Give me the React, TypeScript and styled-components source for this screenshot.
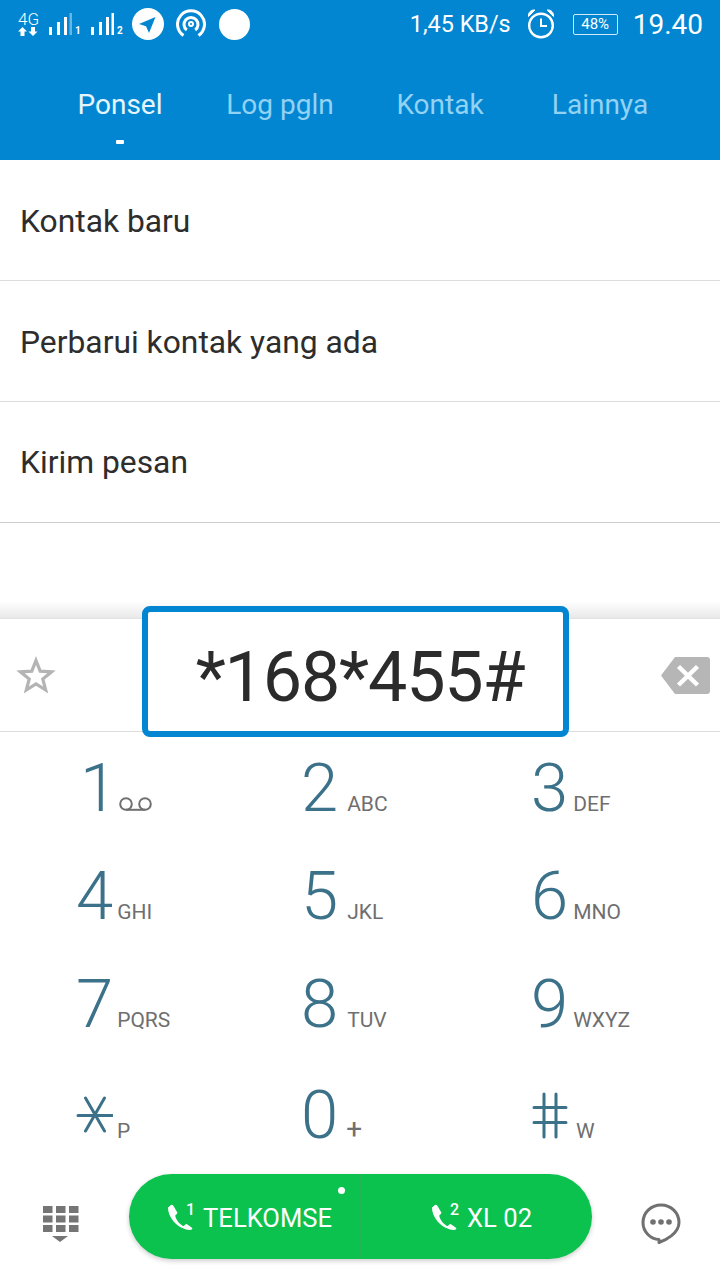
import React, { FC } from 'react';
import styled, { createGlobalStyle } from 'styled-components';

const BLUE = '#0286d2';
const TEAL = '#3b7189';
const GREY = '#6f6f6f';

const keys = [
  { digit: '1', sub: 'voicemail', gap: 0 },
  { digit: '2', sub: 'ABC', gap: 9 },
  { digit: '3', sub: 'DEF', gap: 5 },
  { digit: '4', sub: 'GHI', gap: 4 },
  { digit: '5', sub: 'JKL', gap: 9 },
  { digit: '6', sub: 'MNO', gap: 5 },
  { digit: '7', sub: 'PQRS', gap: 4 },
  { digit: '8', sub: 'TUV', gap: 9 },
  { digit: '9', sub: 'WXYZ', gap: 5 },
  { digit: '*', sub: 'P', gap: 4 },
  { digit: '0', sub: '+', gap: 8 },
  { digit: '#', sub: 'W', gap: 8 },
];

const App: FC = () => {
  return (
    <>
      <GlobalStyle />
      <Screen>
        <Header>
          <StatusBar>
            <StatusLeft>
              <NetworkBadge>
                <NetworkLabel>4G</NetworkLabel>
                <ArrowsIcon />
              </NetworkBadge>
              <SimSignal>
                <SignalIcon weak />
                <SimIndex>1</SimIndex>
              </SimSignal>
              <SimSignal>
                <SignalIcon />
                <SimIndex>2</SimIndex>
              </SimSignal>
              <TelegramIcon />
              <HotspotSvg width="30" height="30" viewBox="0 0 30 30" fill="none" stroke="#fff" strokeWidth="3">
                <path d="M7.500 26.500a13.500 13.500 0 1 1 15 0" />
                <path d="M10.800 21a7 7 0 1 1 8.400 0" />
                <circle cx="15" cy="15" r="2" strokeWidth="2" />
              </HotspotSvg>
              <WhiteDot />
            </StatusLeft>
            <StatusRight>
              <Speed>1,45 KB/s</Speed>
              <AlarmIcon />
              <Battery>48%</Battery>
              <Time>19.40</Time>
            </StatusRight>
          </StatusBar>
          <Tabs>
            <Tab $active>
              Ponsel
              <TabMark />
            </Tab>
            <Tab>Log pgln</Tab>
            <Tab>Kontak</Tab>
            <Tab>Lainnya</Tab>
          </Tabs>
        </Header>

        <List>
          <ListRow>Kontak baru</ListRow>
          <ListRow>Perbarui kontak yang ada</ListRow>
          <ListRow>Kirim pesan</ListRow>
        </List>

        <Shade />

        <DialRow>
          <StarIcon />
          <BackspaceIcon />
          <Highlight>*168*455#</Highlight>
        </DialRow>

        <Keypad>
          {keys.map((key) => (
            <Key key={key.digit}>
              <Digit $shift={key.digit === '1' ? 4 : 0}>
                {key.digit === '*' ? <AsteriskIcon /> : key.digit === '#' ? <HashIcon /> : key.digit}
              </Digit>
              {key.sub === 'voicemail' ? (
                <VoicemailIcon />
              ) : (
                <KeyLetters $gap={key.gap} $plus={key.sub === '+'}>
                  {key.sub}
                </KeyLetters>
              )}
            </Key>
          ))}
        </Keypad>

        <BottomBar>
          <DialpadIcon />
          <CallPill>
            <CallSide>
              <PhoneIcon />
              <SimNumber>1</SimNumber>
              <CallLabel>TELKOMSE</CallLabel>
            </CallSide>
            <CallSide>
              <PhoneIcon />
              <SimNumber>2</SimNumber>
              <CallLabel>XL 02</CallLabel>
            </CallSide>
            <PillDot />
          </CallPill>
          <MessageIcon />
        </BottomBar>
      </Screen>
    </>
  );
};

export default App;

const ArrowsIcon = () => (
  <svg width="20" height="9" viewBox="0 0 20 9" fill="#fff">
    <path d="M4.500 0 9 4.500H6.500V9h-4V4.500H0z" />
    <path d="M15 9l-4.500-4.500H13V0h4v4.500h2.500z" />
  </svg>
);

const SignalIcon: FC<{ weak?: boolean }> = ({ weak }) => (
  <svg width="24" height="23" viewBox="0 0 24 23" fill="#fff">
    <rect x="1" y="14" width="3" height="8" />
    <rect x="9" y="9" width="3" height="13" />
    <rect x="16" y="4" width="3" height="18" />
    <rect x="21.500" y="0" width="2.500" height="22" opacity={weak ? 0.4 : 1} />
  </svg>
);

const TelegramIcon = () => (
  <svg width="32" height="32" viewBox="0 0 32 32">
    <circle cx="16" cy="16" r="16" fill="#fff" />
    <path d="M23.500 9 7 16l7 2.200L17 25z" fill={BLUE} />
  </svg>
);

const AlarmIcon = () => (
  <svg width="28" height="30" viewBox="0 0 28 30" fill="none" stroke="#fff">
    <circle cx="14" cy="16.500" r="11.800" strokeWidth="2.400" />
    <path d="M14 9.500v7.500h6" strokeWidth="2" />
    <path d="M1.500 7.500C1 3.500 4 .5 8 1zM26.500 7.500C27 3.500 24 .5 20 1z" fill="#fff" strokeWidth="1" />
  </svg>
);

const StarIcon = () => (
  <svg width="40" height="38" viewBox="0 0 40 38" fill="none" stroke="#b4b4b4" strokeWidth="3.200">
    <path d="M20 4.500 24.200 15.200 35.600 15.800 26.800 23 29.700 34 20 28 10.300 34 13.200 23 4.400 15.800 15.800 15.200z" />
  </svg>
);

const BackspaceIcon = () => (
  <svg width="50" height="37" viewBox="0 0 50 37">
    <path d="M15 0h32a3 3 0 0 1 3 3v31a3 3 0 0 1-3 3H15L1 18.500z" fill="#b6b6b6" />
    <path d="M18.500 9.500 37.500 28M37.500 9.500 18.500 28" stroke="#fff" strokeWidth="4.500" />
  </svg>
);

const VoicemailIcon = () => (
  <VoicemailSvg width="33" height="14" viewBox="0 0 33 14" fill="none" stroke={GREY} strokeWidth="2">
    <circle cx="7" cy="7" r="5.800" />
    <circle cx="26" cy="7" r="5.800" />
    <path d="M7 12.800h19" />
  </VoicemailSvg>
);

const AsteriskIcon = () => (
  <SymbolSvg $drop={5} width="37" height="37" viewBox="0 0 37 37" fill="none" stroke={TEAL} strokeWidth="3" strokeLinecap="round">
    <path d="M2 19.500h34M9.500 2l19 33M28.500 2l-19 33" />
  </SymbolSvg>
);

const HashIcon = () => (
  <SymbolSvg $drop={-1} width="37" height="47" viewBox="0 0 37 47" fill="none" stroke={TEAL} strokeWidth="3" strokeLinecap="round">
    <path d="M3 15.500h32M3 30.500h32M13 2v43M25 2v43" />
  </SymbolSvg>
);

const DialpadIcon = () => (
  <DialpadSvg width="36" height="36" viewBox="0 0 36 36" fill="#757575">
    {[0, 1, 2].map((row) =>
      [0, 1, 2].map((col) => (
        <rect key={`${row}-${col}`} x={col * 13} y={row * 9.500} width="9.500" height="7" />
      )),
    )}
    <path d="M9 30h16l-8 6z" />
  </DialpadSvg>
);

const MessageIcon = () => (
  <MessageSvg width="40" height="41" viewBox="0 0 40 41" fill="none">
    <path
      d="M20 2C9.800 2 2 9.800 2 19.500S9.800 36 18 36.500V39.500c6-2 20-9 20-20C38 9.800 30.200 2 20 2z"
      stroke="#707070"
      strokeWidth="3"
      strokeLinejoin="round"
    />
    <circle cx="12" cy="19" r="2.800" fill="#707070" />
    <circle cx="20" cy="19" r="2.800" fill="#707070" />
    <circle cx="28" cy="19" r="2.800" fill="#707070" />
  </MessageSvg>
);

const PhoneIcon = () => (
  <svg width="26" height="27" viewBox="0 0 26 27" fill="#fff">
    <path d="M4 1 1 3.500C1 13 10 25 23 26c1.500 0 2.500-.8 2.300-2l-5.300-3.700c-.8-.4-1.300-.1-1.800.4l-1.700 1.500C12 20 8.500 15 8.200 11.500l1.800-1.700c.5-.5.500-1 .2-1.600L6.200 1.500C5.600.7 4.800.5 4 1z" />
  </svg>
);

const GlobalStyle = createGlobalStyle`
  html, body {
    margin: 0;
    padding: 0;
    background: #fff;
  }
  body {
    font-family: Roboto, "Liberation Sans", sans-serif;
  }
`;

const Screen = styled.div`
  width: 720px;
  height: 1280px;
  display: flex;
  flex-direction: column;
  overflow: hidden;
  background: #fff;
`;
const Header = styled.header`
  height: 160px;
  flex-shrink: 0;
  background: ${BLUE};
  color: #fff;
`;
const StatusBar = styled.div`
  height: 50px;
  box-sizing: border-box;
  padding: 0 17px 2px 18px;
  display: flex;
  align-items: center;
  justify-content: space-between;
`;
const StatusLeft = styled.div`
  display: flex;
  align-items: center;
`;
const NetworkBadge = styled.div`
  width: 30px;
  display: flex;
  flex-direction: column;
  align-items: flex-start;
`;
const NetworkLabel = styled.span`
  font-size: 17px;
  font-weight: 300;
  line-height: 15px;
  width: 20px;
`;
const SimSignal = styled.div`
  display: flex;
  align-items: flex-end;
  width: 42px;
`;
const SimIndex = styled.span`
  font-size: 10px;
  font-weight: 700;
  line-height: 10px;
  margin-left: 3px;
`;
const HotspotSvg = styled.svg`
  margin-left: 12px;
`;
const WhiteDot = styled.span`
  width: 31px;
  height: 31px;
  margin-left: 13px;
  border-radius: 50%;
  background: #fff;
`;
const StatusRight = styled.div`
  display: flex;
  align-items: center;
`;
const Speed = styled.span`
  font-size: 23.400px;
  margin-right: 16px;
`;
const Battery = styled.span`
  width: 45px;
  height: 21px;
  box-sizing: border-box;
  margin: 0 15px 0 18px;
  display: flex;
  align-items: center;
  justify-content: center;
  border: 1px solid #cfe9f7;
  border-radius: 2px;
  font-size: 15px;
`;
const Time = styled.span`
  font-size: 28px;
`;
const Tabs = styled.nav`
  height: 110px;
  padding: 0 40px;
  display: grid;
  grid-template-columns: repeat(4, 160px);
`;
const Tab = styled.div<{ $active?: boolean }>`
  position: relative;
  text-align: center;
  font-size: 28px;
  line-height: 110px;
  color: ${(p) => (p.$active ? '#e6f5fd' : '#93d2f2')};
`;
const TabMark = styled.span`
  position: absolute;
  left: 76px;
  top: 90px;
  width: 8px;
  height: 4px;
  border-radius: 1px;
  background: #fff;
`;
const List = styled.div`
  display: flex;
  flex-direction: column;
`;
const ListRow = styled.div`
  height: 121px;
  box-sizing: border-box;
  padding-left: 20px;
  border-bottom: 1px solid #dcdcdc;
  font-size: 31.800px;
  line-height: 122px;
  color: #2d2d2d;
  &:last-child {
    border-bottom-color: #cccccc;
    line-height: 120px;
  }
`;
const Shade = styled.div`
  flex: 1;
  background: linear-gradient(to bottom, #fff 0, #fff 78px, #e9e9e9 100%);
`;
const DialRow = styled.div`
  position: relative;
  height: 114px;
  flex-shrink: 0;
  box-sizing: border-box;
  padding: 0 10px 0 16px;
  display: flex;
  align-items: center;
  justify-content: space-between;
  border-top: 1px solid #e2e2e2;
  border-bottom: 1px solid #dddddd;
`;
const Highlight = styled.div`
  position: absolute;
  left: 142px;
  top: -13px;
  width: 427px;
  height: 131px;
  box-sizing: border-box;
  padding-left: 9px;
  border: 6px solid ${BLUE};
  border-radius: 8px;
  background: #fff;
  text-align: center;
  font-size: 70px;
  letter-spacing: -1.200px;
  line-height: 131px;
  color: #2b2b2b;
`;
const Keypad = styled.div`
  height: 432px;
  flex-shrink: 0;
  box-sizing: border-box;
  padding: 2px 0 0 76px;
  display: grid;
  grid-template-columns: 225px 230px 1fr;
  grid-template-rows: 108px 108px 111px 103px;
`;
const Key = styled.div`
  display: flex;
  align-items: baseline;
`;
const Digit = styled.span<{ $shift: number }>`
  margin-left: ${(p) => p.$shift}px;
  font-size: 67px;
  font-weight: 300;
  line-height: 108px;
  color: ${TEAL};
`;
const KeyLetters = styled.span<{ $gap: number; $plus?: boolean }>`
  margin-left: ${(p) => p.$gap}px;
  font-size: ${(p) => (p.$plus ? 28 : 21)}px;
  color: ${GREY};
`;
const VoicemailSvg = styled.svg`
  margin-left: 2px;
`;
const SymbolSvg = styled.svg<{ $drop: number }>`
  vertical-align: ${(p) => p.$drop}px;
`;
const BottomBar = styled.div`
  height: 116px;
  flex-shrink: 0;
  box-sizing: border-box;
  padding: 10px 0 0 43px;
  display: flex;
  align-items: flex-start;
`;
const DialpadSvg = styled.svg`
  margin: 32px 50px 0 0;
`;
const CallPill = styled.div`
  position: relative;
  width: 463px;
  height: 85px;
  display: grid;
  grid-template-columns: 231px 232px;
  border-radius: 43px;
  background: #0bc24f;
  box-shadow: 0 2px 5px rgba(0, 0, 0, 0.2);
`;
const CallSide = styled.div`
  padding: 2px 0 0 10px;
  display: flex;
  align-items: center;
  justify-content: center;
  color: #fff;
  & + & {
    border-left: 1px solid #23b45a;
  }
`;
const SimNumber = styled.span`
  align-self: flex-start;
  margin: 24px 0 0 -7px;
  font-size: 16px;
  font-weight: 500;
`;
const CallLabel = styled.span`
  margin-left: 8px;
  font-size: 25.600px;
`;
const PillDot = styled.span`
  position: absolute;
  left: 209px;
  top: 13px;
  width: 7px;
  height: 7px;
  border-radius: 50%;
  background: #fff;
`;
const MessageSvg = styled.svg`
  margin: 29px 0 0 49px;
`;
